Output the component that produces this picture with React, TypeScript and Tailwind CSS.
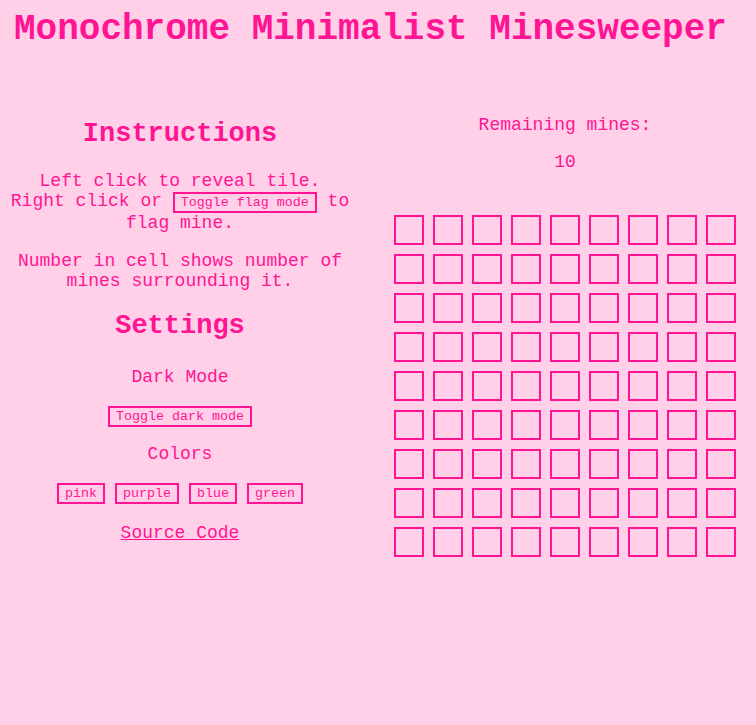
import React from "react";

const ROWS = 9;
const COLS = 9;

const Cell = () => (
  <button className="w-[30px] h-[30px] border-2 border-[#ff1493] bg-transparent"></button>
);

const SmallButton = ({ label }: { label: string }) => (
  <button className="inline-block border-2 border-[#ff1493] bg-transparent px-[6px] py-px text-[13.33px] leading-[normal] text-[#ff1493] align-baseline">
    {label}
  </button>
);

export default function App() {
  return (
    <div className="min-h-screen bg-[#ffd0e8] text-[#ff1493] font-['Liberation_Mono','Courier_New',monospace] text-[18px] leading-[normal]">
      <h1 className="pt-[9px] pl-[14px] text-[36px] font-bold leading-[normal]">
        Monochrome Minimalist Minesweeper
      </h1>
      <div className="flex items-start mt-[65px]">
        <div className="w-[360px] text-center pt-[4px]">
          <h2 className="text-[27px] font-bold leading-[normal] mb-[22px]">Instructions</h2>
          <p>
            Left click to reveal tile.
            <br />
            Right click or <SmallButton label="Toggle flag mode" /> to flag mine.
          </p>
          <p className="mt-[18px]">Number in cell shows number of mines surrounding it.</p>
          <h2 className="text-[27px] font-bold leading-[normal] mt-[20px] mb-[26px]">Settings</h2>
          <p>Dark Mode</p>
          <div className="mt-[18px]">
            <SmallButton label="Toggle dark mode" />
          </div>
          <p className="mt-[17px]">Colors</p>
          <div className="mt-[19px] flex justify-center gap-[10px]">
            <SmallButton label="pink" />
            <SmallButton label="purple" />
            <SmallButton label="blue" />
            <SmallButton label="green" />
          </div>
          <div className="mt-[19px]">
            <a href="#" className="underline">Source Code</a>
          </div>
        </div>
        <div className="flex-1 pl-[14px] flex flex-col items-center">
          <p>Remaining mines:</p>
          <p className="mt-[17px]">10</p>
          <div className="mt-[43px] grid grid-cols-[repeat(9,30px)] gap-[9px]">
            {Array.from({ length: ROWS * COLS }).map((_, i) => (
              <Cell key={i} />
            ))}
          </div>
        </div>
      </div>
    </div>
  );
}
